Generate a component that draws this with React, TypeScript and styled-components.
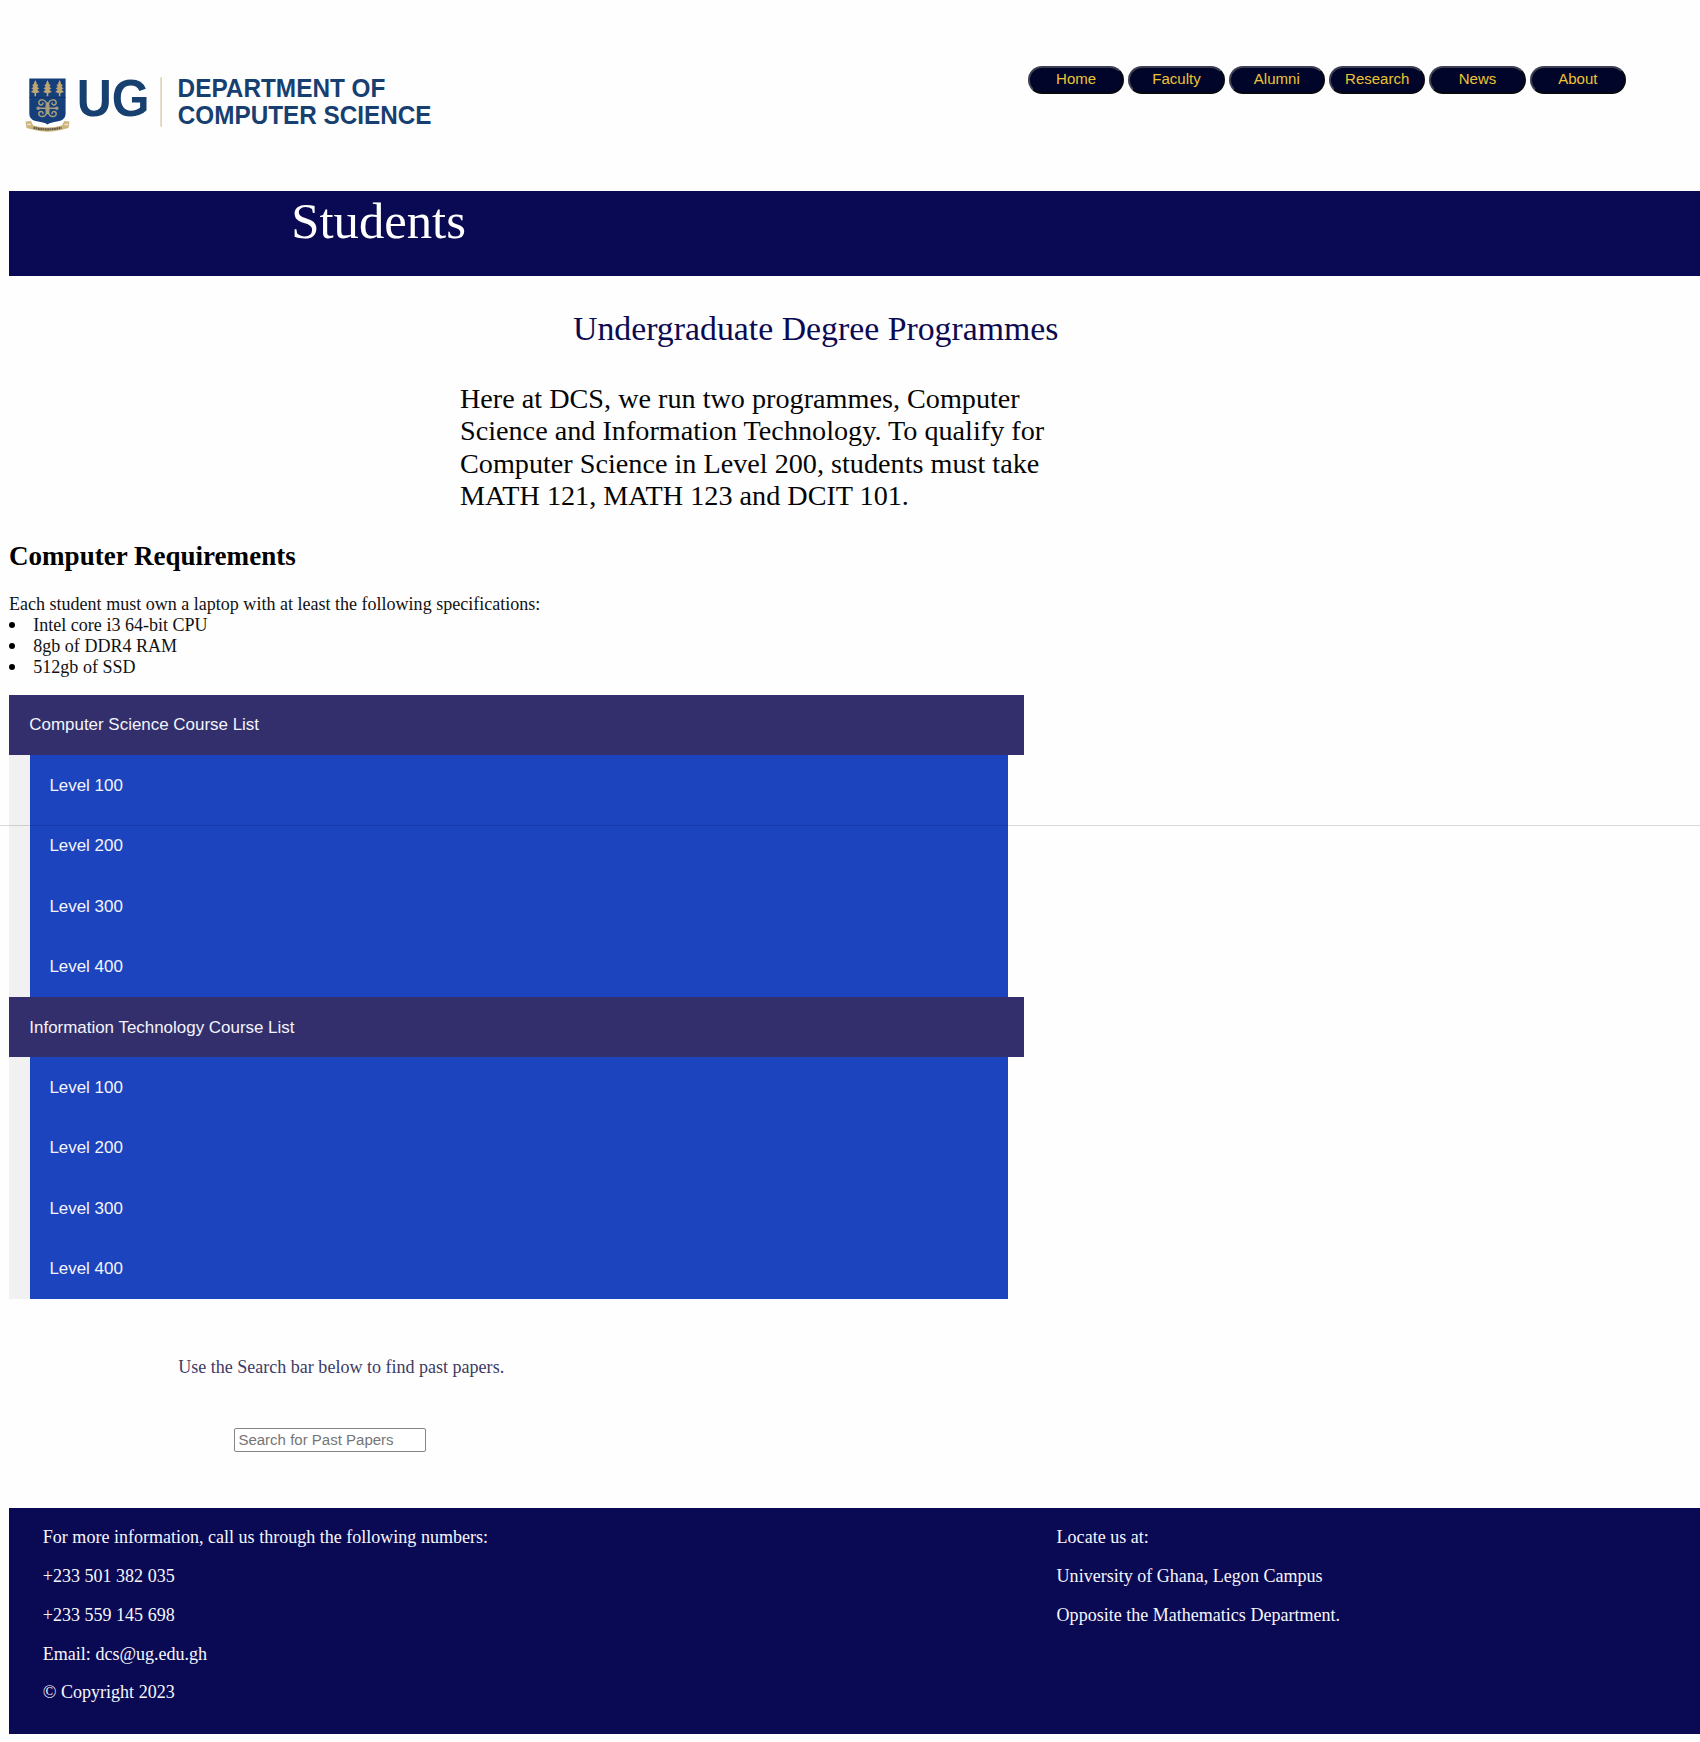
import React from "react";
import styled, { createGlobalStyle } from "styled-components";

const serif = '"Liberation Serif", "Times New Roman", serif';
const sans = '"Liberation Sans", Arial, sans-serif';

const GlobalStyle = createGlobalStyle`
  * { box-sizing: border-box; }
  body {
    margin: 0;
    background: #fefefe;
    color: #111;
    font-family: ${serif};
    font-size: 18.04px;
    line-height: 20.75px;
    overflow-x: hidden;
  }
  h1, h2, p, ul { margin: 0; padding: 0; }
`;

const Page = styled.div`
  position: relative;
  height: 1742px;
  padding-left: 9px;
`;

const Header = styled.header`
  display: flex;
  justify-content: space-between;
  align-items: flex-start;
  height: 191.3px;
  padding: 65.7px 74px 0 11px;
`;

const Logo = styled.svg`
  display: block;
  width: 440px;
  height: 75px;
  overflow: visible;
  font-family: ${sans};
  font-weight: 700;
`;

const Nav = styled.nav`
  display: flex;
  gap: 4.05px;
`;

const NavButton = styled.button`
  width: 96.3px;
  height: 28.2px;
  padding: 0 0 1px;
  border: 2px solid;
  border-color: #3c4050 #06080f #06080f #3c4050;
  border-radius: 14.1px;
  background: #02052a;
  color: #eac435;
  font: 15.03px/20px ${sans};
  text-align: center;
`;

const Banner = styled.div`
  height: 84.7px;
  padding: 1.4px 0 0 282.3px;
  background: #0a0a54;
`;

const BannerTitle = styled.h1`
  color: #fff;
  font-weight: 400;
  font-size: 50.7px;
  line-height: 56.6px;
`;

const ProgrammeTitle = styled.h2`
  margin: 34.3px 0 0 564px;
  color: #0c0a52;
  font-weight: 400;
  font-size: 33.8px;
  line-height: 38.8px;
`;

const Intro = styled.p`
  width: 600px;
  margin: 33.7px 0 0 451px;
  color: #050505;
  font-size: 28.2px;
  line-height: 32.55px;
`;

const SectionTitle = styled.h2`
  margin-top: 27.8px;
  color: #000;
  font-size: 27.05px;
  line-height: 31px;
`;

const Requirements = styled.div`
  margin-top: 22.6px;
`;

const SpecList = styled.ul`
  list-style: none;
`;

const Spec = styled.li`
  display: flex;
  align-items: center;
  gap: 18.3px;
  &::before {
    content: "";
    width: 6px;
    height: 6px;
    border-radius: 50%;
    background: #000;
  }
`;

const Courses = styled.section`
  width: 1014.6px;
  margin-top: 17.2px;
`;

const Accordion = styled.button<{ $level?: boolean }>`
  display: block;
  width: 100%;
  height: 60.45px;
  padding: 1.2px 20.3px 0 ${(p) => (p.$level ? "19.8px" : "20.3px")};
  border: 0;
  background: ${(p) => (p.$level ? "#1c44bf" : "#322f6c")};
  color: #f4f4fb;
  font: 16.95px/20px ${sans};
  text-align: left;
`;

const Panel = styled.div`
  width: 999.3px;
  padding-left: 20.6px;
  background: #f1f1f1;
`;

const SearchHint = styled.p`
  margin: 57.8px 0 0 169.2px;
  color: #3d3a66;
`;

const SearchInput = styled.input`
  display: block;
  width: 191.4px;
  height: 24.6px;
  margin: 50.4px 0 0 225.4px;
  padding: 0 3px 2px;
  border: 1px solid #858585;
  border-radius: 2px;
  background: #fff;
  font: 15.03px/20px ${sans};
  &::placeholder { color: #757575; }
`;

const Footer = styled.footer`
  display: grid;
  grid-template-columns: 1013.8px 1fr;
  height: 225.2px;
  margin-top: 55.9px;
  padding: 18.8px 0 0 33.8px;
  background: #0a0a54;
  color: #f6f6fc;
`;

const FooterColumn = styled.div`
  display: flex;
  flex-direction: column;
  gap: 18.05px;
`;

const Seam = styled.div`
  position: absolute;
  top: 825px;
  left: 0;
  right: 0;
  height: 1px;
  background: rgba(0, 0, 0, 0.14);
`;

const navItems = ["Home", "Faculty", "Alumni", "Research", "News", "About"];
const specs = ["Intel core i3 64-bit CPU", "8gb of DDR4 RAM", "512gb of SSD"];
const levels = ["Level 100", "Level 200", "Level 300", "Level 400"];
const programmes = ["Computer Science Course List", "Information Technology Course List"];
const contacts = [
  "For more information, call us through the following numbers:",
  "+233 501 382 035",
  "+233 559 145 698",
  "Email: dcs@ug.edu.gh",
  "© Copyright 2023",
];
const location = [
  "Locate us at:",
  "University of Ghana, Legon Campus",
  "Opposite the Mathematics Department.",
];

const Tree = ({ x }: { x: number }) => (
  <path
    transform={`translate(${x} 79.8)`}
    fill="#bfa672"
    d="M0 0 1.5 3.2 1.2 4 3.2 4.8 1.8 6.8 4 8.2 1.9 9.6 4.4 11.8 .8 13.2V16.2H-.8V13.2L-4.4 11.8-1.9 9.6-4 8.2-1.8 6.8-3.2 4.8-1.2 4-1.5 3.2Z"
  />
);

const Crest = () => (
  <g>
    <path d="M29.3 78.3H65.6V113.5Q65.6 119.2 59.5 120.8 51 122 47.5 124.2 44 122 35.4 120.8 29.3 119.2 29.3 113.5Z" fill="#143f7b" />
    <path d="M29.3 97.2H65.6" stroke="#0f3468" strokeWidth="0.8" />
    <Tree x={35.3} />
    <Tree x={47.5} />
    <Tree x={59.6} />
    <g fill="none" stroke="#a99d7c" strokeWidth="1.45" strokeLinecap="round">
      <path d="M38.5 107.9H56.5M47.5 102.5V113.3" />
      <path d="M47.5 107.9C44.8 107.7 46.8 105 46.4 103.3 45.6 98.6 39 98.4 38.8 102.2 38.8 105.4 43.3 105.4 43 102.6" />
      <path d="M47.5 107.9C50.2 107.7 48.2 105 48.6 103.3 49.4 98.6 56 98.4 56.2 102.2 56.2 105.4 51.7 105.4 52 102.6" />
      <path d="M47.5 107.9C44.8 108.1 46.8 110.8 46.4 112.5 45.6 117.2 39 117.4 38.8 113.6 38.8 110.4 43.3 110.4 43 113.2" />
      <path d="M47.5 107.9C50.2 108.1 48.2 110.8 48.6 112.5 49.4 117.2 56 117.4 56.2 113.6 56.2 110.4 51.7 110.4 52 113.2" />
      <circle cx="38.2" cy="107.9" r="1.1" />
      <circle cx="56.8" cy="107.9" r="1.1" />
    </g>
    <path d="M25.6 121.3 31 120.8 33.2 125.3Q47.5 129.2 62 125.3L64.2 120.8 69.5 121.3 68.5 127.6 61.7 129.5Q47.5 133.3 33.3 129.5L26.5 127.6Z" fill="#cdb47e" />
    <path d="M33.5 127.3Q47.5 130.8 61.5 127.3" fill="none" stroke="#625a4a" strokeWidth="2.2" strokeDasharray="1.8 .5" />
    <path d="M27 124.2H31M64.5 124.2H68" stroke="#eee2c6" strokeWidth="1.4" />
  </g>
);

export default function App() {
  return (
    <>
      <GlobalStyle />
      <Page>
        <Header>
          <Logo viewBox="20 65.7 440 75" role="img" aria-label="UG Department of Computer Science">
            <Crest />
            <g fill="#173f70">
              <text x="76.8" y="115.5" fontSize="52.5" textLength="72.8" lengthAdjust="spacingAndGlyphs">UG</text>
              <text x="177.6" y="97.1" fontSize="25.6" textLength="207.8" lengthAdjust="spacingAndGlyphs">DEPARTMENT OF</text>
              <text x="177.8" y="123.6" fontSize="25.6" textLength="253.6" lengthAdjust="spacingAndGlyphs">COMPUTER SCIENCE</text>
            </g>
            <path d="M161.1 77V126.5" stroke="#dccdac" strokeWidth="1.5" />
          </Logo>
          <Nav>
            {navItems.map((item) => (
              <NavButton key={item}>{item}</NavButton>
            ))}
          </Nav>
        </Header>

        <Banner>
          <BannerTitle>Students</BannerTitle>
        </Banner>

        <ProgrammeTitle>Undergraduate Degree Programmes</ProgrammeTitle>
        <Intro>
          Here at DCS, we run two programmes, Computer Science and Information Technology. To qualify for
          Computer Science in Level 200, students must take MATH 121, MATH 123 and DCIT 101.
        </Intro>

        <SectionTitle>Computer Requirements</SectionTitle>
        <Requirements>
          <p>Each student must own a laptop with at least the following specifications:</p>
          <SpecList>
            {specs.map((spec) => (
              <Spec key={spec}>{spec}</Spec>
            ))}
          </SpecList>
        </Requirements>

        <Courses>
          {programmes.map((programme) => (
            <React.Fragment key={programme}>
              <Accordion>{programme}</Accordion>
              <Panel>
                {levels.map((level) => (
                  <Accordion key={level} $level>
                    {level}
                  </Accordion>
                ))}
              </Panel>
            </React.Fragment>
          ))}
        </Courses>

        <SearchHint>Use the Search bar below to find past papers.</SearchHint>
        <SearchInput placeholder="Search for Past Papers" />

        <Footer>
          <FooterColumn>
            {contacts.map((line) => (
              <p key={line}>{line}</p>
            ))}
          </FooterColumn>
          <FooterColumn>
            {location.map((line) => (
              <p key={line}>{line}</p>
            ))}
          </FooterColumn>
        </Footer>
        <Seam />
      </Page>
    </>
  );
}
